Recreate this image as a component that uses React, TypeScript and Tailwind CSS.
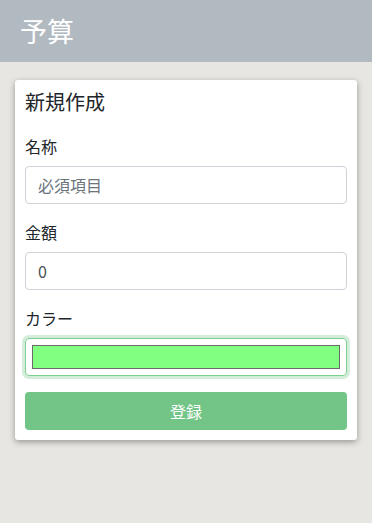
const jp = '"Noto Sans CJK JP", "Noto Sans", sans-serif';

function Field({ label, children }: { label: string; children: React.ReactNode }) {
  return (
    <div className="mb-4 flex flex-col">
      <label className="mb-2 text-[16px] leading-6 text-[#212529]">{label}</label>
      {children}
    </div>
  );
}

export default function App() {
  return (
    <div className="min-h-screen bg-[#e8e6e2]" style={{ fontFamily: jp }}>
      <header className="flex h-[62px] items-center bg-[#b1b9c1] px-5">
        <h1 className="text-[27px] leading-8 text-white">予算</h1>
      </header>
      <main className="px-[15px] pt-[18px]">
        <div className="rounded-[3px] bg-white p-[10px] shadow-[0_2px_6px_rgba(0,0,0,0.35)]">
          <h2 className="mb-5 text-[20px] leading-6 text-[#212529]">新規作成</h2>
          <Field label="名称">
            <input
              placeholder="必須項目"
              className="h-[38px] rounded-[4px] border border-[#ced4da] px-3 text-[16px] text-[#495057] placeholder:text-[#6c757d] outline-none"
            />
          </Field>
          <Field label="金額">
            <input
              defaultValue="0"
              className="h-[38px] rounded-[4px] border border-[#ced4da] px-3 text-[16px] text-[#495057] outline-none"
            />
          </Field>
          <Field label="カラー">
            <div className="flex h-[38px] items-center rounded-[4px] border border-[#7ccf91] px-[6px] shadow-[0_0_0_3px_rgba(114,197,135,0.3)]">
              <div className="h-[24px] w-full border border-[#6b6b6b] bg-[#80ff80]" />
            </div>
          </Field>
          <button className="h-[38px] w-full rounded-[4px] bg-[#72c587] text-[16px] text-white">
            登録
          </button>
        </div>
      </main>
    </div>
  );
}
